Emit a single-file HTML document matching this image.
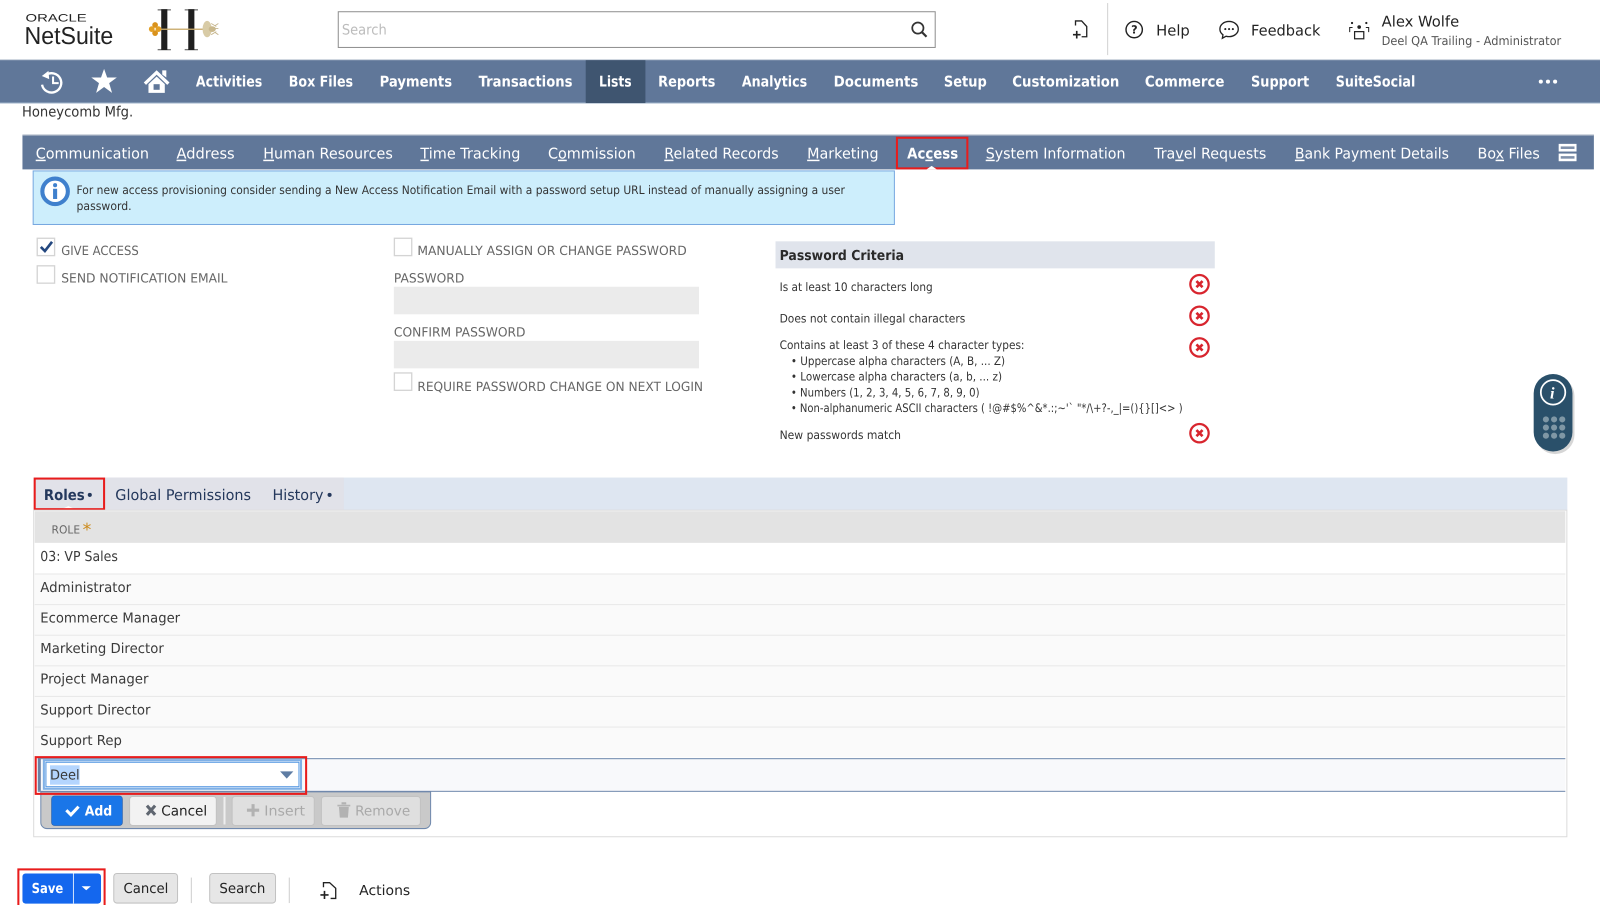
<!DOCTYPE html>
<html lang="en"><head><meta charset="utf-8"><title>Employee Access</title>
<style>
html,body{margin:0;padding:0;background:#fff;width:1600px;height:905px;overflow:hidden}
svg{display:block}
text{font-family:"DejaVu Sans","Liberation Sans",sans-serif;text-rendering:geometricPrecision;white-space:pre}
.nav{font-size:14.5px;font-weight:bold;fill:#fff}
.sub{font-size:14.5px;fill:#fff}
.lab{font-size:12.5px;fill:#666}
.crit{font-size:11.5px;fill:#333}
.row{font-size:13.5px;fill:#3a3a3a}
.u{text-decoration:underline}
</style></head><body>
<svg xmlns="http://www.w3.org/2000/svg" width="1600" height="905" viewBox="0 0 1568 886.9">
<rect width="1568" height="887" fill="#fff"/>

<!-- Header -->
<text x="25" y="21" font-size="10.5" fill="#222" textLength="60" lengthAdjust="spacingAndGlyphs" style="font-family:'Liberation Sans',sans-serif">ORACLE</text>
<text x="24" y="43" font-size="24" fill="#222" textLength="87" lengthAdjust="spacingAndGlyphs" style="font-family:'Liberation Sans',sans-serif">NetSuite</text>

<!-- Company logo -->
<g>
<rect x="154.500" y="9" width="13" height="1.300" fill="#777"/><rect x="181" y="9" width="13" height="1.300" fill="#777"/>
<rect x="154.500" y="48" width="13" height="1.300" fill="#777"/><rect x="181" y="48" width="13" height="1.300" fill="#777"/>
<rect x="158" y="9" width="6" height="40" fill="#1f1f1f"/>
<rect x="184.500" y="9" width="6" height="40" fill="#1f1f1f"/>
<rect x="157" y="28" width="44" height="1.300" fill="#c8a96a"/>
<circle cx="152" cy="24.500" r="2.800" fill="#d9921c"/><circle cx="152" cy="32.500" r="2.800" fill="#d9921c"/>
<circle cx="148.700" cy="28.500" r="2.800" fill="#e3a026"/><circle cx="155.300" cy="28.500" r="2.800" fill="#e3a026"/>
<ellipse cx="203" cy="28.500" rx="4.500" ry="8" fill="#d8cba6"/>
<ellipse cx="208" cy="28.500" rx="3.500" ry="2.800" fill="#c9b88d"/>
<path d="M207 23l5 3M207 34l5-3M210 28h4M211 25l3-2M211 32l3 2" stroke="#c6b68e" stroke-width=".9" fill="none"/>
</g>

<!-- Search -->
<rect x="331.500" y="11.500" width="585" height="35" fill="#fff" stroke="#8f8f8f"/>
<text x="335" y="34" font-size="14" fill="#bcbcbc" textLength="44" lengthAdjust="spacingAndGlyphs">Search</text>
<circle cx="899.500" cy="27.500" r="5.500" fill="none" stroke="#333" stroke-width="1.700"/>
<path d="M903.500 31.500l4.500 4.500" stroke="#333" stroke-width="2.200"/>

<!-- Right header icons -->
<path d="M1054 25v-4.500h6l5 5.500v10h-5" fill="none" stroke="#222" stroke-width="1.300"/>
<path d="M1051.500 34h7.500M1055.200 30.200v7.500" stroke="#222" stroke-width="1.600"/>
<rect x="1085" y="3" width="1" height="51" fill="#d2d2d2"/>
<circle cx="1111.500" cy="29" r="8" fill="none" stroke="#222" stroke-width="1.400"/>
<text x="1108.500" y="33" font-size="11" font-weight="bold" fill="#222">?</text>
<text x="1133" y="35" font-size="14.500" fill="#222" textLength="33" lengthAdjust="spacingAndGlyphs">Help</text>
<path d="M1204.500 21c-5 0-9 3.200-9 7.500 0 2.300 1.100 4.200 3 5.600l-.6 3.400 3.700-2c.9.300 1.900.4 2.900.4 5 0 9-3.300 9-7.400s-4-7.500-9-7.500z" fill="none" stroke="#222" stroke-width="1.300"/>
<circle cx="1200.800" cy="28.500" r="1" fill="#222"/><circle cx="1204.500" cy="28.500" r="1" fill="#222"/><circle cx="1208.200" cy="28.500" r="1" fill="#222"/>
<text x="1226" y="35" font-size="14.500" fill="#222" textLength="68" lengthAdjust="spacingAndGlyphs">Feedback</text>
<circle cx="1332" cy="26.500" r="1.800" fill="#222"/>
<circle cx="1325" cy="22.500" r="1.100" fill="#222"/><circle cx="1339" cy="22.500" r="1.100" fill="#222"/>
<path d="M1325.500 27h-2.800v4.500M1338.500 27h2.800v4.500" fill="none" stroke="#222" stroke-width="1"/>
<rect x="1327.500" y="31" width="9" height="7" fill="none" stroke="#222" stroke-width="1.200"/>
<text x="1354" y="26" font-size="14.500" fill="#222" textLength="76" lengthAdjust="spacingAndGlyphs">Alex Wolfe</text>
<text x="1354" y="44" font-size="12" fill="#555" textLength="176" lengthAdjust="spacingAndGlyphs">Deel QA Trailing - Administrator</text>

<!-- Nav bar -->
<rect x="0" y="58.500" width="1568" height="42.500" fill="#607799"/>
<rect x="0" y="58" width="1568" height="1" fill="#c5ced9"/>
<rect x="0" y="100.500" width="1568" height="1" fill="#a9bcd0"/>
<rect x="574" y="59" width="58.500" height="42" fill="#3f5570"/>

<path d="M45 73.500a9.500 9.500 0 1 1-3.800 9.500" fill="none" stroke="#fff" stroke-width="2.300"/>
<path d="M41 74.500l6.500-5 .7 8z" fill="#fff"/>
<path d="M52 75v6.500h5.500" fill="none" stroke="#fff" stroke-width="2"/>
<polygon points="102,67.500 105,76 114.500,76 107,81.500 109.800,91 102,85.300 94.200,91 97,81.500 89.500,76 99,76" fill="#fff"/>
<path d="M142 82l11.500-11 11.500 11" fill="none" stroke="#fff" stroke-width="3.200"/>
<path d="M159 69h4v7l-4-3z" fill="#fff"/>
<path d="M145.500 82.500l8-7.500 8 7.500v8.500h-16z" fill="#fff"/>
<rect x="150.500" y="82.500" width="6" height="5.500" fill="#607799"/>

<text class="nav" x="192" y="85" textLength="65" lengthAdjust="spacingAndGlyphs">Activities</text>
<text class="nav" x="283" y="85" textLength="63" lengthAdjust="spacingAndGlyphs">Box Files</text>
<text class="nav" x="372" y="85" textLength="71" lengthAdjust="spacingAndGlyphs">Payments</text>
<text class="nav" x="469" y="85" textLength="92" lengthAdjust="spacingAndGlyphs">Transactions</text>
<text class="nav" x="587" y="85" textLength="32" lengthAdjust="spacingAndGlyphs">Lists</text>
<text class="nav" x="645" y="85" textLength="56" lengthAdjust="spacingAndGlyphs">Reports</text>
<text class="nav" x="727" y="85" textLength="64" lengthAdjust="spacingAndGlyphs">Analytics</text>
<text class="nav" x="817" y="85" textLength="83" lengthAdjust="spacingAndGlyphs">Documents</text>
<text class="nav" x="925" y="85" textLength="42" lengthAdjust="spacingAndGlyphs">Setup</text>
<text class="nav" x="992" y="85" textLength="105" lengthAdjust="spacingAndGlyphs">Customization</text>
<text class="nav" x="1122" y="85" textLength="78" lengthAdjust="spacingAndGlyphs">Commerce</text>
<text class="nav" x="1226" y="85" textLength="57" lengthAdjust="spacingAndGlyphs">Support</text>
<text class="nav" x="1309" y="85" textLength="78" lengthAdjust="spacingAndGlyphs">SuiteSocial</text>
<circle cx="1510" cy="80" r="2" fill="#fff"/><circle cx="1517" cy="80" r="2" fill="#fff"/><circle cx="1524" cy="80" r="2" fill="#fff"/>

<text x="21.500" y="114" font-size="14" fill="#333" textLength="109" lengthAdjust="spacingAndGlyphs">Honeycomb Mfg.</text>

<!-- Subtabs -->
<rect x="22" y="132" width="1540" height="34" fill="#607799"/>
<rect x="22" y="132" width="1540" height="1" fill="#a9b4c4"/>
<text class="sub" x="35" y="155.500" textLength="111" lengthAdjust="spacingAndGlyphs"><tspan class="u">C</tspan>ommunication</text>
<text class="sub" x="173" y="155.500" textLength="57" lengthAdjust="spacingAndGlyphs"><tspan class="u">A</tspan>ddress</text>
<text class="sub" x="258" y="155.500" textLength="127" lengthAdjust="spacingAndGlyphs"><tspan class="u">H</tspan>uman Resources</text>
<text class="sub" x="412" y="155.500" textLength="98" lengthAdjust="spacingAndGlyphs"><tspan class="u">T</tspan>ime Tracking</text>
<text class="sub" x="537" y="155.500" textLength="86" lengthAdjust="spacingAndGlyphs">C<tspan class="u">o</tspan>mmission</text>
<text class="sub" x="651" y="155.500" textLength="112" lengthAdjust="spacingAndGlyphs"><tspan class="u">R</tspan>elated Records</text>
<text class="sub" x="791" y="155.500" textLength="70" lengthAdjust="spacingAndGlyphs"><tspan class="u">M</tspan>arketing</text>
<text class="sub" x="889" y="155.500" font-weight="bold" textLength="50" lengthAdjust="spacingAndGlyphs">Ac<tspan class="u">c</tspan>ess</text>
<text class="sub" x="966" y="155.500" textLength="137" lengthAdjust="spacingAndGlyphs"><tspan class="u">S</tspan>ystem Information</text>
<text class="sub" x="1131" y="155.500" textLength="110" lengthAdjust="spacingAndGlyphs">Tra<tspan class="u">v</tspan>el Requests</text>
<text class="sub" x="1269" y="155.500" textLength="151" lengthAdjust="spacingAndGlyphs"><tspan class="u">B</tspan>ank Payment Details</text>
<text class="sub" x="1448" y="155.500" textLength="61" lengthAdjust="spacingAndGlyphs">Bo<tspan class="u">x</tspan> Files</text>
<rect x="1527.500" y="141" width="17.500" height="7.500" fill="#fff"/>
<rect x="1529.500" y="143.500" width="13.500" height="2.500" fill="#7f90aa"/>
<rect x="1527.500" y="150.500" width="17.500" height="7.500" fill="#fff"/>
<rect x="1529.500" y="153" width="13.500" height="2.500" fill="#7f90aa"/>
<rect x="879" y="135" width="69" height="30" fill="none" stroke="#e81c1c" stroke-width="2"/>
<path d="M908 166l5-3.500 5 3.500z" fill="#fff"/>

<!-- Info box -->
<rect x="32.500" y="167.500" width="844" height="52.500" fill="#cdeefc" stroke="#77a8e0"/>
<circle cx="54" cy="187.500" r="12.500" fill="#fff" stroke="#3f80cd" stroke-width="4"/>
<circle cx="54" cy="181.500" r="2" fill="#3f80cd"/>
<rect x="52" y="185" width="4" height="10" fill="#3f80cd"/>
<text x="75" y="190" font-size="11.500" fill="#333" textLength="753" lengthAdjust="spacingAndGlyphs">For new access provisioning consider sending a New Access Notification Email with a password setup URL instead of manually assigning a user</text>
<text x="75" y="206" font-size="11.500" fill="#333" textLength="54" lengthAdjust="spacingAndGlyphs">password.</text>

<!-- Left checkboxes -->
<rect x="36.500" y="233.500" width="17" height="17" fill="#fff" stroke="#d4d4d4" stroke-width="1.300"/>
<path d="M40 242l4 4 7-9" fill="none" stroke="#23477f" stroke-width="2.600"/>
<rect x="36.500" y="260.500" width="17" height="17" fill="#fff" stroke="#d4d4d4" stroke-width="1.300"/>
<text class="lab" x="60" y="250" textLength="76" lengthAdjust="spacingAndGlyphs">GIVE ACCESS</text>
<text class="lab" x="60" y="277" textLength="163" lengthAdjust="spacingAndGlyphs">SEND NOTIFICATION EMAIL</text>

<!-- Password column -->
<rect x="386.500" y="233.500" width="17" height="17" fill="#fff" stroke="#d4d4d4" stroke-width="1.300"/>
<text class="lab" x="409" y="250" textLength="264" lengthAdjust="spacingAndGlyphs">MANUALLY ASSIGN OR CHANGE PASSWORD</text>
<text class="lab" x="386" y="277" textLength="69" lengthAdjust="spacingAndGlyphs">PASSWORD</text>
<rect x="386" y="281" width="299" height="27" fill="#ebebeb"/>
<text class="lab" x="386" y="330" textLength="129" lengthAdjust="spacingAndGlyphs">CONFIRM PASSWORD</text>
<rect x="386" y="334" width="299" height="27" fill="#ebebeb"/>
<rect x="386.500" y="365.500" width="17" height="17" fill="#fff" stroke="#d4d4d4" stroke-width="1.300"/>
<text class="lab" x="409" y="383" textLength="280" lengthAdjust="spacingAndGlyphs">REQUIRE PASSWORD CHANGE ON NEXT LOGIN</text>

<!-- Password criteria -->
<rect x="760" y="236.500" width="430.500" height="26.500" fill="#e0e4ec"/>
<text x="764" y="255" font-size="13.500" font-weight="bold" fill="#2a2a2a" textLength="122" lengthAdjust="spacingAndGlyphs">Password Criteria</text>
<text class="crit" x="764" y="285" textLength="150" lengthAdjust="spacingAndGlyphs">Is at least 10 characters long</text>
<text class="crit" x="764" y="316" textLength="182" lengthAdjust="spacingAndGlyphs">Does not contain illegal characters</text>
<text class="crit" x="764" y="342" textLength="240" lengthAdjust="spacingAndGlyphs">Contains at least 3 of these 4 character types:</text>
<text class="crit" x="775" y="357.500" textLength="210" lengthAdjust="spacingAndGlyphs">• Uppercase alpha characters (A, B, ... Z)</text>
<text class="crit" x="775" y="373" textLength="207" lengthAdjust="spacingAndGlyphs">• Lowercase alpha characters (a, b, ... z)</text>
<text class="crit" x="775" y="388.500" textLength="185" lengthAdjust="spacingAndGlyphs">• Numbers (1, 2, 3, 4, 5, 6, 7, 8, 9, 0)</text>
<text class="crit" x="775" y="404" textLength="384" lengthAdjust="spacingAndGlyphs">• Non-alphanumeric ASCII characters ( !@#$%^&amp;*.:;~'` "*/\+?-,_|=(){}[]&lt;&gt; )</text>
<text class="crit" x="764" y="430" textLength="119" lengthAdjust="spacingAndGlyphs">New passwords match</text>
<g fill="#fff" stroke="#d8252e" stroke-width="2.200">
<circle cx="1175.500" cy="278.500" r="9"/><circle cx="1175.500" cy="309.500" r="9"/><circle cx="1175.500" cy="340.500" r="9"/><circle cx="1175.500" cy="424.500" r="9"/>
</g>
<g stroke="#d8252e" stroke-width="2.600" fill="none">
<path d="M1172.500 275.500l6 6M1178.500 275.500l-6 6"/><path d="M1172.500 306.500l6 6M1178.500 306.500l-6 6"/><path d="M1172.500 337.500l6 6M1178.500 337.500l-6 6"/><path d="M1172.500 421.500l6 6M1178.500 421.500l-6 6"/>
</g>

<!-- Floating widget -->
<rect x="1505" y="369" width="38" height="76" rx="19" fill="#000" opacity=".16"/>
<rect x="1503" y="366.500" width="38" height="76" rx="19" fill="#2a506a"/>
<circle cx="1522" cy="384.500" r="12" fill="none" stroke="#fff" stroke-width="1.700"/>
<text x="1519" y="390.500" font-size="16" font-style="italic" font-weight="bold" fill="#fff" style="font-family:'Liberation Serif',serif">i</text>
<g fill="#7f97a5">
<circle cx="1515" cy="411" r="3"/><circle cx="1523" cy="411" r="3"/><circle cx="1531" cy="411" r="3"/>
<circle cx="1515" cy="419" r="3"/><circle cx="1523" cy="419" r="3"/><circle cx="1531" cy="419" r="3"/>
<circle cx="1515" cy="427" r="3"/><circle cx="1523" cy="427" r="3"/><circle cx="1531" cy="427" r="3"/>
</g>

<!-- Sublist tabs -->
<rect x="33" y="468" width="1503" height="32" fill="#dee6f1"/>
<rect x="33" y="468" width="304" height="32" fill="#e1e2e9"/>
<text x="43" y="490" font-size="14.500" font-weight="bold" fill="#24385c" textLength="40" lengthAdjust="spacingAndGlyphs">Roles</text>
<circle cx="88" cy="485" r="2" fill="#24385c"/>
<text x="113" y="490" font-size="14.500" fill="#24385c" textLength="133" lengthAdjust="spacingAndGlyphs">Global Permissions</text>
<text x="267" y="490" font-size="14.500" fill="#24385c" textLength="50" lengthAdjust="spacingAndGlyphs">History</text>
<circle cx="323" cy="485" r="2" fill="#24385c"/>
<path d="M58 500l9-4 9 4z" fill="#fff"/>
<rect x="34" y="469" width="68" height="30" fill="none" stroke="#e81c1c" stroke-width="2"/>

<!-- Table -->
<rect x="33" y="500" width="1502.500" height="320" fill="#fff" stroke="#dcdcdc"/>
<rect x="34" y="501" width="1500" height="31" fill="#e3e3e3"/>
<text x="50.500" y="523" font-size="11" fill="#666" textLength="28" lengthAdjust="spacingAndGlyphs">ROLE</text>
<text x="81" y="525" font-size="17" fill="#cc8a1a">*</text>
<rect x="34" y="562" width="1500" height="30" fill="#fafafa"/>
<rect x="34" y="592" width="1500" height="30" fill="#fafafa"/>
<rect x="34" y="622" width="1500" height="30" fill="#fafafa"/>
<rect x="34" y="652" width="1500" height="30" fill="#fafafa"/>
<rect x="34" y="682" width="1500" height="30" fill="#fafafa"/>
<rect x="34" y="712" width="1500" height="30" fill="#fafafa"/>
<g fill="#e8e8e8">
<rect x="34" y="562" width="1500" height="1"/><rect x="34" y="592" width="1500" height="1"/><rect x="34" y="622" width="1500" height="1"/><rect x="34" y="652" width="1500" height="1"/><rect x="34" y="682" width="1500" height="1"/><rect x="34" y="712" width="1500" height="1"/>
</g>
<text class="row" x="39.500" y="550" textLength="76" lengthAdjust="spacingAndGlyphs">03: VP Sales</text>
<text class="row" x="39.500" y="580" textLength="89" lengthAdjust="spacingAndGlyphs">Administrator</text>
<text class="row" x="39.500" y="610" textLength="137" lengthAdjust="spacingAndGlyphs">Ecommerce Manager</text>
<text class="row" x="39.500" y="640" textLength="121" lengthAdjust="spacingAndGlyphs">Marketing Director</text>
<text class="row" x="39.500" y="670" textLength="106" lengthAdjust="spacingAndGlyphs">Project Manager</text>
<text class="row" x="39.500" y="700" textLength="108" lengthAdjust="spacingAndGlyphs">Support Director</text>
<text class="row" x="39.500" y="730" textLength="80" lengthAdjust="spacingAndGlyphs">Support Rep</text>

<!-- Edit row -->
<rect x="37" y="743" width="1497" height="32" fill="#f8f9fb"/>
<rect x="37" y="743" width="1497" height="1" fill="#7089ad"/>
<rect x="37" y="775" width="1497" height="1" fill="#7089ad"/>
<rect x="37" y="743" width="3" height="32" fill="#6a80a3"/>
<rect x="43" y="745" width="252" height="28" fill="#fff" stroke="#7fb0e6" stroke-width="2"/>
<rect x="45" y="747" width="248" height="24" fill="none" stroke="#4e93e0"/>
<rect x="49" y="750" width="29" height="19" fill="#b4d5fe"/>
<text class="row" x="49" y="764" textLength="29" lengthAdjust="spacingAndGlyphs">Deel</text>
<path d="M274.500 756h13l-6.500 7z" fill="#5e7ca3"/>

<!-- Edit buttons -->
<path d="M40 776v30a6 6 0 0 0 6 6h370a6 6 0 0 0 6-6v-30z" fill="#c9c9c9" stroke="#7089ad"/>
<rect x="50.500" y="780" width="69.500" height="29" rx="3" fill="#1a76e8" stroke="#2b5fa8" stroke-width=".6"/>
<path d="M65 794l4.500 4.500 7.500-8" fill="none" stroke="#fff" stroke-width="3"/>
<text x="83" y="799" font-size="13.500" font-weight="bold" fill="#fff" textLength="27" lengthAdjust="spacingAndGlyphs">Add</text>
<rect x="127" y="780.500" width="85" height="28.500" rx="3" fill="#f2f2f2" stroke="#c2c2c2"/>
<path d="M144 789.500l8 9M152 789.500l-8 9" stroke="#5f6670" stroke-width="3"/>
<text x="158" y="799" font-size="13.500" fill="#222" textLength="45" lengthAdjust="spacingAndGlyphs">Cancel</text>
<rect x="219" y="781" width="2" height="27" fill="#eeeeee"/>
<rect x="227.500" y="780.500" width="80.500" height="28.500" rx="3" fill="#dfdfdf" stroke="#c2c2c2"/>
<path d="M242 794h12M248 788v12" stroke="#b2b2b2" stroke-width="3"/>
<text x="259" y="799" font-size="13.500" fill="#a9a9a9" textLength="40" lengthAdjust="spacingAndGlyphs">Insert</text>
<rect x="315" y="780.500" width="97" height="28.500" rx="3" fill="#dfdfdf" stroke="#c2c2c2"/>
<path d="M331 789h12v1h-12zM332.500 791h9l-.8 10h-7.400zM335 786.500h4v1.500h-4z" fill="#b2b2b2" stroke="#b2b2b2" stroke-width=".6"/>
<text x="348" y="799" font-size="13.500" fill="#a9a9a9" textLength="54" lengthAdjust="spacingAndGlyphs">Remove</text>
<rect x="35" y="742" width="265" height="36" fill="none" stroke="#e81c1c" stroke-width="2"/>

<!-- Footer buttons -->
<rect x="22" y="856" width="77" height="29.500" rx="3" fill="#1467ee"/>
<rect x="71.500" y="856" width="1" height="29.500" fill="#cfe0fb"/>
<text x="31" y="875" font-size="13.500" font-weight="bold" fill="#fff" textLength="31" lengthAdjust="spacingAndGlyphs">Save</text>
<path d="M80 868.500h9l-4.500 4z" fill="#fff"/>
<rect x="18" y="852" width="84.500" height="38" fill="none" stroke="#e81c1c" stroke-width="2"/>
<rect x="111.500" y="856" width="62.500" height="29" rx="3" fill="#e6e6e6" stroke="#c2c2c2"/>
<text x="121" y="875" font-size="13.500" fill="#222" textLength="44" lengthAdjust="spacingAndGlyphs">Cancel</text>
<rect x="187" y="860" width="1" height="25" fill="#cfcfcf"/>
<rect x="205.500" y="856" width="64.500" height="29" rx="3" fill="#e6e6e6" stroke="#c2c2c2"/>
<text x="215" y="875" font-size="13.500" fill="#222" textLength="45" lengthAdjust="spacingAndGlyphs">Search</text>
<rect x="283" y="860" width="1" height="25" fill="#cfcfcf"/>
<path d="M317 869.500v-4.500h6l6 5.500v10h-5" fill="none" stroke="#222" stroke-width="1.300"/>
<path d="M314 877h8M318 873v8" stroke="#222" stroke-width="1.600"/>
<text x="352" y="877" font-size="13.500" fill="#222" textLength="50" lengthAdjust="spacingAndGlyphs">Actions</text>
</svg>
</body></html>
